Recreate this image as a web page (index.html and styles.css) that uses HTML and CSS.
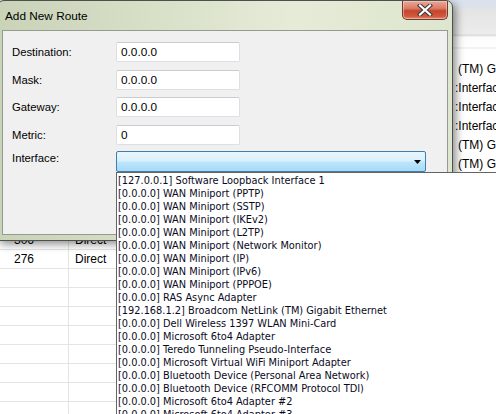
FILE: index.html
```html
<!DOCTYPE html>
<html>
<head>
<meta charset="utf-8">
<link rel="stylesheet" href="styles.css">
</head>
<body>
<div class="desktop">
  <div class="bgwin">
    <div class="bg-top"></div>
    <div class="bg-rows">
      <div class="bg-row"><div class="c1"></div><div class="c2"></div><div class="c3"></div><div class="c4 pad">(TM) Gigabit Ethernet</div></div>
      <div class="bg-row"><div class="c1"></div><div class="c2"></div><div class="c3"></div><div class="c4">:Interface</div></div>
      <div class="bg-row"><div class="c1"></div><div class="c2"></div><div class="c3"></div><div class="c4">:Interface</div></div>
      <div class="bg-row"><div class="c1"></div><div class="c2"></div><div class="c3"></div><div class="c4">:Interface</div></div>
      <div class="bg-row"><div class="c1"></div><div class="c2"></div><div class="c3"></div><div class="c4 pad">(TM) Gigabit Ethernet</div></div>
      <div class="bg-row"><div class="c1"></div><div class="c2"></div><div class="c3"></div><div class="c4 pad">(TM) Gigabit Ethernet</div></div>
      <div class="bg-row"><div class="c1"></div><div class="c2"></div><div class="c3"></div><div class="c4"></div></div>
      <div class="bg-row"><div class="c1"></div><div class="c2"></div><div class="c3"></div><div class="c4"></div></div>
      <div class="bg-row"><div class="c1"></div><div class="c2"></div><div class="c3"></div><div class="c4"></div></div>
      <div class="bg-row"><div class="c1">306</div><div class="c2">Direct</div><div class="c3"></div><div class="c4"></div></div>
      <div class="bg-row"><div class="c1">276</div><div class="c2">Direct</div><div class="c3"></div><div class="c4"></div></div>
      <div class="bg-row"><div class="c1"></div><div class="c2"></div><div class="c3"></div><div class="c4"></div></div>
      <div class="bg-row"><div class="c1"></div><div class="c2"></div><div class="c3"></div><div class="c4"></div></div>
      <div class="bg-row"><div class="c1"></div><div class="c2"></div><div class="c3"></div><div class="c4"></div></div>
      <div class="bg-row"><div class="c1"></div><div class="c2"></div><div class="c3"></div><div class="c4"></div></div>
      <div class="bg-row"><div class="c1"></div><div class="c2"></div><div class="c3"></div><div class="c4"></div></div>
      <div class="bg-row"><div class="c1"></div><div class="c2"></div><div class="c3"></div><div class="c4"></div></div>
      <div class="bg-row"><div class="c1"></div><div class="c2"></div><div class="c3"></div><div class="c4"></div></div>
      <div class="bg-row"><div class="c1"></div><div class="c2"></div><div class="c3"></div><div class="c4"></div></div>
    </div>
  </div>

  <div class="dialog">
    <div class="titlebar">
      <span class="title">Add New Route</span>
      <div class="close">
        <svg width="18" height="12" viewBox="0 0 18 12">
          <path d="M4 1.5 L14 10.5 M14 1.5 L4 10.5" stroke="#3b3b3b" stroke-width="4.2" stroke-linecap="square" fill="none"/>
          <path d="M4 1.5 L14 10.5 M14 1.5 L4 10.5" stroke="#ffffff" stroke-width="2.2" stroke-linecap="square" fill="none"/>
        </svg>
      </div>
    </div>
    <div class="client">
      <div class="form">
        <div class="row"><span class="lbl">Destination:</span><div class="tb">0.0.0.0</div></div>
        <div class="row"><span class="lbl">Mask:</span><div class="tb">0.0.0.0</div></div>
        <div class="row"><span class="lbl">Gateway:</span><div class="tb">0.0.0.0</div></div>
        <div class="row"><span class="lbl">Metric:</span><div class="tb">0</div></div>
        <div class="row combo-row"><span class="lbl lbl-top">Interface:</span>
          <div class="combo">
            <svg class="arrow" width="7" height="4" viewBox="0 0 7 4"><path d="M0 0 H7 L3.5 4 Z" fill="#000"/></svg>
          </div>
        </div>
      </div>
    </div>
  </div>

  <div class="droplist">
    <div class="item">[127.0.0.1] Software Loopback Interface 1</div>
    <div class="item">[0.0.0.0] WAN Miniport (PPTP)</div>
    <div class="item">[0.0.0.0] WAN Miniport (SSTP)</div>
    <div class="item">[0.0.0.0] WAN Miniport (IKEv2)</div>
    <div class="item">[0.0.0.0] WAN Miniport (L2TP)</div>
    <div class="item">[0.0.0.0] WAN Miniport (Network Monitor)</div>
    <div class="item">[0.0.0.0] WAN Miniport (IP)</div>
    <div class="item">[0.0.0.0] WAN Miniport (IPv6)</div>
    <div class="item">[0.0.0.0] WAN Miniport (PPPOE)</div>
    <div class="item">[0.0.0.0] RAS Async Adapter</div>
    <div class="item">[192.168.1.2] Broadcom NetLink (TM) Gigabit Ethernet</div>
    <div class="item">[0.0.0.0] Dell Wireless 1397 WLAN Mini-Card</div>
    <div class="item">[0.0.0.0] Microsoft 6to4 Adapter</div>
    <div class="item">[0.0.0.0] Teredo Tunneling Pseudo-Interface</div>
    <div class="item">[0.0.0.0] Microsoft Virtual WiFi Miniport Adapter</div>
    <div class="item">[0.0.0.0] Bluetooth Device (Personal Area Network)</div>
    <div class="item">[0.0.0.0] Bluetooth Device (RFCOMM Protocol TDI)</div>
    <div class="item">[0.0.0.0] Microsoft 6to4 Adapter #2</div>
    <div class="item">[0.0.0.0] Microsoft 6to4 Adapter #3</div>
  </div>
</div>
</body>
</html>
```
FILE: styles.css
```css
* { box-sizing: border-box; }
html, body { margin: 0; padding: 0; }
body { width: 496px; height: 414px; overflow: hidden; background: #fff; font-family: "Liberation Sans", Arial, sans-serif; }

.desktop { position: relative; width: 496px; height: 414px; overflow: hidden; background: #fff; }

/* background window (route table) */
.bgwin { position: absolute; left: 0; top: 0; width: 496px; height: 414px; display: flex; flex-direction: column; background: #fff; }
.bg-top { height: 60px; flex: none; background: linear-gradient(#dce2ec 0, #dce2ec 8px, #e4e4e4 9px, #ececec 34px, #d6d6d6 35px, #fbfbfb 37px, #ffffff 47px, #e6e6e6 48px, #ffffff 49px); }
.bg-rows { display: flex; flex-direction: column; }
.bg-row { display: flex; height: 19px; font-size: 12px; color: #000; line-height: 18px; }
.bg-row .c1 { width: 69px; padding-left: 14px; border-right: 1px solid #e4e4e4; border-bottom: 1px solid #e4e4e4; }
.bg-row .c2 { width: 60px; padding-left: 6px; border-bottom: 1px solid #e4e4e4; }
.bg-row .c3 { width: 326px; }
.bg-row .c4 { flex: 1; white-space: nowrap; overflow: hidden; font-size: 12px; }
.bg-row .c4.pad { padding-left: 3px; }

/* dialog window */
.dialog { position: absolute; left: -3px; top: 0; width: 456px; height: 241px; border: 1px solid #4d514b; border-radius: 7px 7px 0 0; background: linear-gradient(90deg, #c9d3b8 0%, #d8e0c8 35%, #e6ebd8 65%, #e1e8d1 85%, #dfe6cf 100%); box-shadow: 3px 3px 9px rgba(0,0,0,0.45); padding: 0 4px 5px 4px; display: flex; flex-direction: column; }
.titlebar { height: 29px; flex: none; display: flex; align-items: flex-start; justify-content: space-between; }
.title { font-size: 11.8px; color: #000; padding: 8px 0 0 3px; }
.close { width: 46px; height: 19px; border: 1px solid #6e3a30; border-top: none; border-radius: 0 0 5px 5px; background: linear-gradient(#e9a897 0%, #dd7d68 40%, #c6452c 55%, #cf5a3e 85%, #e08a6e 100%); display: flex; align-items: center; justify-content: center; box-shadow: inset 0 0 0 1px rgba(255,220,210,0.5); }
.client { flex: 1; border: 1px solid #939c8e; background: #f0f0f0; }

.form { display: flex; flex-direction: column; gap: 7.7px; padding: 11px 0 0 9px; }
.row { display: flex; align-items: center; }
.lbl { width: 104px; font-size: 11.3px; color: #000; }
.lbl-top { align-self: flex-start; padding-top: 1px; }
.combo-row { margin-top: -1.7px; }
.tb { width: 124px; height: 20px; background: #fff; border: 1px solid #dcdfe3; border-top-color: #c9ccd1; border-radius: 2px; font-size: 11.8px; line-height: 18px; padding-left: 4px; color: #000; }
.combo { position: relative; width: 310px; height: 21px; border: 1px solid #3c7fb1; border-radius: 2px; background: linear-gradient(#eaf6fd 0%, #d9f0fc 48%, #bee6fd 52%, #a7d9f5 100%); display: flex; align-items: center; justify-content: flex-end; padding-right: 4px; }
.arrow { display: block; }

/* dropdown list overlay */
.droplist { position: absolute; left: 116px; top: 172px; width: 420px; height: 260px; background: #fff; border: 1px solid #646464; padding-top: 1px; }
.item { height: 13px; line-height: 13px; padding-left: 1px; font-family: "DejaVu Sans Condensed", "DejaVu Sans", sans-serif; font-size: 10.9px; color: #0a0a1e; white-space: nowrap; }
```
